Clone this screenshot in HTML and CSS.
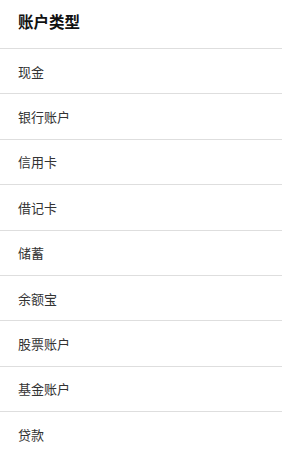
FILE: index.html
```html
<!DOCTYPE html>
<html lang="zh-CN">
<head>
  <meta charset="UTF-8" />
  <meta name="viewport" content="width=device-width, initial-scale=1.0"/>
  <title>账户类型</title>
  <link rel="stylesheet" href="styles.css">
</head>
<body>
  <div class="header">
    <h2>账户类型</h2>
  </div>
  <ul class="type-list">
    <li>现金</li>
    <li>银行账户</li>
    <li>信用卡</li>
    <li>借记卡</li>
    <li>储蓄</li>
    <li>余额宝</li>
    <li>股票账户</li>
    <li>基金账户</li>
    <li>贷款</li>
  </ul>
</body>
</html>
```

FILE: styles.css
```css
body {
  font-family: "Noto Sans CJK SC", "Noto Sans", sans-serif;
  background-color: #fff;
  color: #222;
  margin: 0;
}
.header {
  height: 49px;
  padding: 0 18px;
  display: flex;
  align-items: center;
  border-bottom: 1px solid #dedede;
  box-sizing: border-box;
}
.header h2 {
  margin: 0 0 6px 0;
  font-size: 15.5px;
  font-weight: bold;
  color: #111;
}
.type-list {
  list-style: none;
  margin: 0;
  padding: 0;
}
.type-list li {
  height: 45.4px;
  padding: 0 18px;
  display: flex;
  align-items: center;
  font-size: 13px;
  color: #333;
  border-bottom: 1px solid #dedede;
  box-sizing: border-box;
}
.type-list li:last-child {
  border-bottom: none;
}
```
